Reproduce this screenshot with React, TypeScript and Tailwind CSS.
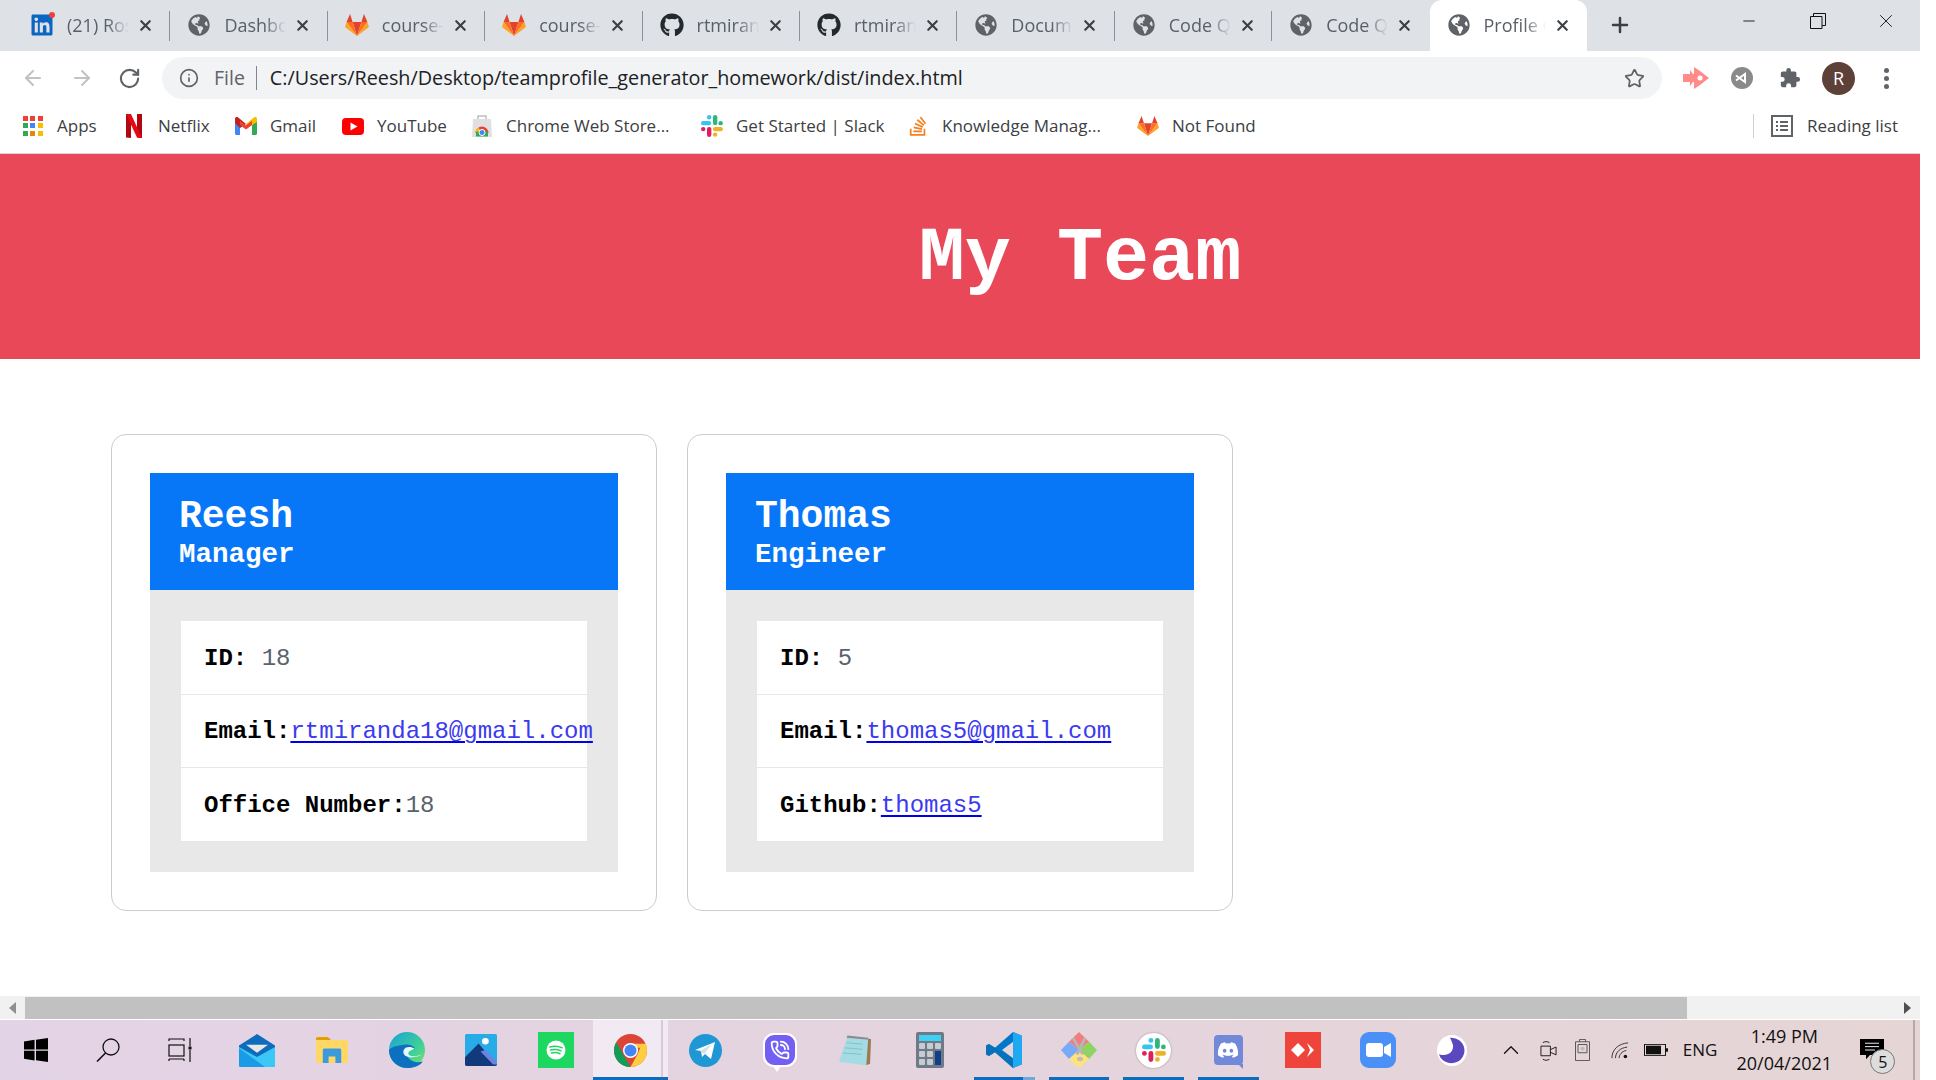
import { ReactNode } from "react";
import { FaGithub, FaGlobeAmericas, FaLinkedin, FaStackOverflow, FaDiscord } from "react-icons/fa";
import { ArrowLeft, ArrowRight, ChevronUp, Info, Minus, PhoneCall, Plus, RotateCw, Star, X } from "lucide-react";

const ui = "font-['Open_Sans',sans-serif]";

function GitLab({ size = 24 }: { size?: number }) {
  return (
    <svg width={size} height={size} viewBox="0 0 24 24">
      <path d="M12 23 16.400 9H7.600Z" fill="#e24329" />
      <path d="M12 23 7.600 9H1.600Z" fill="#fc6d26" />
      <path d="M12 23 16.400 9h6Z" fill="#fc6d26" />
      <path d="M1.600 9 .2 13.400c-.1.400 0 .8.400 1L12 23Z" fill="#fca326" />
      <path d="M22.400 9l1.400 4.400c.1.400 0 .8-.4 1L12 23Z" fill="#fca326" />
      <path d="M1.600 9h6L5 1Z" fill="#e24329" />
      <path d="M22.400 9h-6L19 1Z" fill="#e24329" />
    </svg>
  );
}

function Globe() {
  return <FaGlobeAmericas size={22} className="text-[#5f6368]" />;
}

function LinkedIn() {
  return (
    <span className="relative block">
      <FaLinkedin size={24} className="text-[#0a66c2]" />
      <span className="absolute -right-[1px] -top-[1px] h-[6px] w-[6px] rounded-full bg-[#ea4335]" />
    </span>
  );
}

function Octocat() {
  return <FaGithub size={24} className="text-[#24292e]" />;
}

const tabs: { icon: ReactNode; title: string }[] = [
  { icon: <LinkedIn />, title: "(21) Rosh Miranda" },
  { icon: <Globe />, title: "Dashboard" },
  { icon: <GitLab />, title: "course-content" },
  { icon: <GitLab />, title: "course-content" },
  { icon: <Octocat />, title: "rtmiranda18" },
  { icon: <Octocat />, title: "rtmiranda18" },
  { icon: <Globe />, title: "Document" },
  { icon: <Globe />, title: "Code Quiz" },
  { icon: <Globe />, title: "Code Quiz" },
];

function Tab({ icon, title, active, last }: { icon: ReactNode; title: string; active?: boolean; last?: boolean }) {
  return (
    <div className={`relative flex h-[51px] w-[157.4px] shrink-0 items-center pb-[1px] pl-[17px] ${active ? "rounded-t-[12px] bg-white" : ""}`}>
      <span className="flex w-[24px] justify-center">{icon}</span>
      <span className="ml-[13px] w-[62px] overflow-hidden whitespace-nowrap text-[18px] text-[#5a5f66] [mask-image:linear-gradient(to_right,black_65%,transparent)]">
        {title}
      </span>
      <X size={17} strokeWidth={3} className="ml-[8px] text-[#3c4043]" />
      {!last && !active && <span className="absolute right-0 top-[11px] h-[30px] w-[1px] bg-[#8d9096]" />}
    </div>
  );
}

function AppsGrid() {
  const colors = ["#ef4136", "#ea4335", "#ef4136", "#34a853", "#4285f4", "#fbbc04", "#34a853", "#ea8600", "#fbbc04"];
  return (
    <span className="grid h-[20px] w-[20px] grid-cols-3 gap-[2px]">
      {colors.map((c, i) => (
        <svg key={i} viewBox="0 0 5 5" width="5" height="5">
          <rect width="5" height="5" fill={c} />
        </svg>
      ))}
    </span>
  );
}

function Netflix() {
  return (
    <svg width="16" height="24" viewBox="0 0 16 24">
      <path d="M0 0h5v24l-5-.6Z" fill="#b20710" />
      <path d="M11 0h5v24l-5-.6Z" fill="#b20710" />
      <path d="M0 0h5l11 24-5-.6Z" fill="#e50914" />
    </svg>
  );
}

function Gmail() {
  return (
    <svg width="22" height="18" viewBox="0 0 22 18">
      <path d="M0 2v14.500C0 17.300.7 18 1.500 18H5V8Z" fill="#4285f4" />
      <path d="M22 2v14.500c0 .8-.7 1.500-1.500 1.500H17V8Z" fill="#34a853" />
      <path d="M0 2c0-2 2-2.500 3.200-1.500L11 7 5 11 0 6Z" fill="#c5221f" />
      <path d="M22 2c0-2-2-2.500-3.200-1.500L11 7v5l6-4 5-3Z" fill="#fbbc04" />
      <path d="M5 3.800 11 8.500l6-4.700V8l-6 4.500L5 8Z" fill="#ea4335" />
    </svg>
  );
}

function YouTube() {
  return (
    <svg width="22" height="17" viewBox="0 0 22 17">
      <rect width="22" height="17" rx="4" fill="#f00" />
      <path d="M8.500 4.500v8l7-4Z" fill="#fff" />
    </svg>
  );
}

function WebStore() {
  return (
    <svg width="20" height="22" viewBox="0 0 20 22">
      <path d="M6 4V1h8v3" fill="none" stroke="#bdbdbd" strokeWidth="1.500" />
      <path d="M1 4h18l1 18H0Z" fill="#e0e0e0" />
      <path d="M3.500 18a6.500 6.500 0 0 1 13 0Z" fill="#ea4335" />
      <path d="M3.500 18a6.500 6.500 0 0 1 3-5.500L10 18Z" fill="#fbbc04" />
      <path d="M4 16.500h12v5H4Z" fill="#34a853" />
      <circle cx="10" cy="17.500" r="3" fill="#4285f4" stroke="#fff" />
    </svg>
  );
}

function Slack({ size = 22 }: { size?: number }) {
  return (
    <svg width={size} height={size} viewBox="0 0 24 24">
      <rect x="0" y="6.500" width="11" height="4.800" rx="2.400" fill="#36c5f0" />
      <rect x="6.500" y="0" width="4.800" height="4.800" rx="2.400" fill="#36c5f0" />
      <rect x="13" y="0" width="4.800" height="11" rx="2.400" fill="#2eb67d" />
      <rect x="19" y="6.500" width="4.800" height="4.800" rx="2.400" fill="#2eb67d" />
      <rect x="13" y="13" width="11" height="4.800" rx="2.400" fill="#ecb22e" />
      <rect x="13" y="19" width="4.800" height="4.800" rx="2.400" fill="#ecb22e" />
      <rect x="6.500" y="13" width="4.800" height="11" rx="2.400" fill="#e01e5a" />
      <rect x="0" y="13" width="4.800" height="4.800" rx="2.400" fill="#e01e5a" />
    </svg>
  );
}

const bookmarks: { icon: ReactNode; label: string; w: string }[] = [
  { icon: <AppsGrid />, label: "Apps", w: "w-[101px]" },
  { icon: <Netflix />, label: "Netflix", w: "w-[112px]" },
  { icon: <Gmail />, label: "Gmail", w: "w-[107px]" },
  { icon: <YouTube />, label: "YouTube", w: "w-[129px]" },
  { icon: <WebStore />, label: "Chrome Web Store...", w: "w-[230px]" },
  { icon: <Slack />, label: "Get Started | Slack", w: "w-[206px]" },
  { icon: <FaStackOverflow size={22} className="text-[#f48024]" />, label: "Knowledge Manag...", w: "w-[230px]" },
  { icon: <GitLab />, label: "Not Found", w: "w-[150px]" },
];

function ReadingList() {
  return (
    <svg width="22" height="22" viewBox="0 0 22 22" fill="none" stroke="#5f6368" strokeWidth="2">
      <rect x="1" y="1" width="20" height="20" />
      <path d="M5 7h2M9 7h8M5 11h2M9 11h8M5 15h2M9 15h8" strokeWidth="1.800" />
    </svg>
  );
}

function PuzzleIcon() {
  return (
    <svg width="22" height="22" viewBox="0 0 24 24" fill="#5f6368">
      <path d="M20.500 11H19V7c0-1.100-.9-2-2-2h-4V3.500a2.500 2.500 0 0 0-5 0V5H4c-1.100 0-2 .9-2 2v3.800h1.500a2.700 2.700 0 0 1 0 5.400H2V20c0 1.100.9 2 2 2h3.800v-1.500a2.700 2.700 0 0 1 5.400 0V22H17c1.100 0 2-.9 2-2v-4h1.500a2.500 2.500 0 0 0 0-5Z" />
    </svg>
  );
}

function BrowserChrome() {
  return (
    <>
      <div className={`flex h-[51px] items-start bg-[#dee1e6] pl-[13px] ${ui}`}>
        {tabs.map((t, i) => (
          <Tab key={i} icon={t.icon} title={t.title} last={i === tabs.length - 1} />
        ))}
        <Tab icon={<Globe />} title="Profile Generator" active />
        <Plus size={24} strokeWidth={2.500} className="ml-[21px] mt-[13px] text-[#3c4043]" />
        <div className="ml-auto flex text-[#111]">
          <span className="flex h-[42px] w-[69px] items-center justify-center">
            <Minus size={18} strokeWidth={1.200} />
          </span>
          <span className="flex h-[42px] w-[69px] items-center justify-center">
            <svg width="16" height="16" viewBox="0 0 16 16" fill="none" stroke="#111">
              <path d="M.5 3.500h11.500v12H.5Z" />
              <path d="M3.500 3.500V.5h12v12h-3.500" />
            </svg>
          </span>
          <span className="flex h-[42px] w-[68px] items-center justify-center">
            <X size={22} strokeWidth={1} />
          </span>
        </div>
      </div>

      <div className={`flex h-[54px] items-center bg-white ${ui}`}>
        <ArrowLeft size={24} strokeWidth={2} className="ml-[21px] text-[#c0c2c5]" />
        <ArrowRight size={24} strokeWidth={2} className="ml-[25px] text-[#c0c2c5]" />
        <RotateCw size={23} strokeWidth={2.200} className="ml-[24px] text-[#5f6368]" />
        <div className="ml-[21px] flex h-[42px] w-[1500px] items-center rounded-full bg-[#f1f3f4] pl-[17px]">
          <Info size={20} strokeWidth={2} className="text-[#5f6368]" />
          <span className="ml-[15px] text-[19.500px] text-[#5f6368]">File</span>
          <span className="ml-[11px] h-[24px] w-[1px] bg-[#80868b]" />
          <span className="ml-[13px] text-[19.800px] text-[#202124]">C:/Users/Reesh/Desktop/teamprofile_generator_homework/dist/index.html</span>
          <Star size={21} strokeWidth={2} className="ml-auto mr-[17px] text-[#5f6368]" />
        </div>
        <svg width="26" height="22" viewBox="0 0 26 22" className="ml-[21px]">
          <path d="M0 7h7V3l3 4h1V0l6 4 9 7-9 7-6 4v-7h-1l-3 4v-4H0Z" fill="#ff8b8b" />
          <circle cx="17" cy="11" r="2.500" fill="#fff" />
        </svg>
        <span className="ml-[22px] flex h-[22px] w-[22px] items-center justify-center rounded-full bg-[#8a8a8a]">
          <svg width="14" height="12" viewBox="0 0 14 12" fill="none" stroke="#fff" strokeWidth="2">
            <path d="M1 3.500 10 10V2L1 8.500" />
          </svg>
        </span>
        <span className="ml-[26px]">
          <PuzzleIcon />
        </span>
        <span className="ml-[21px] flex h-[33px] w-[33px] items-center justify-center rounded-full bg-[#5d4037] text-[18px] text-white">R</span>
        <span className="ml-[29px] flex flex-col gap-[3px]">
          <i className="block h-[5px] w-[5px] rounded-full bg-[#5f6368]" />
          <i className="block h-[5px] w-[5px] rounded-full bg-[#5f6368]" />
          <i className="block h-[5px] w-[5px] rounded-full bg-[#5f6368]" />
        </span>
      </div>

      <div className={`flex h-[49px] items-center border-b border-[#d8d8d8] bg-white pb-[6px] pl-[22px] pr-[22px] ${ui}`}>
        {bookmarks.map((b) => (
          <div key={b.label} className={`flex shrink-0 items-center ${b.w}`}>
            <span className="flex w-[22px] justify-center">{b.icon}</span>
            <span className="ml-[13px] whitespace-nowrap text-[17px] text-[#3c4043]">{b.label}</span>
          </div>
        ))}
        <div className="ml-auto flex items-center">
          <span className="h-[24px] w-[1px] bg-[#cfcfcf]" />
          <span className="ml-[17px]">
            <ReadingList />
          </span>
          <span className="ml-[14px] whitespace-nowrap text-[17px] text-[#3c4043]">Reading list</span>
        </div>
      </div>
    </>
  );
}

type Row = { label: string; value: string; href?: boolean; gap?: boolean };

const people: { name: string; role: string; rows: Row[] }[] = [
  {
    name: "Reesh",
    role: "Manager",
    rows: [
      { label: "ID:", value: "18", gap: true },
      { label: "Email:", value: "rtmiranda18@gmail.com", href: true },
      { label: "Office Number:", value: "18" },
    ],
  },
  {
    name: "Thomas",
    role: "Engineer",
    rows: [
      { label: "ID:", value: "5", gap: true },
      { label: "Email:", value: "thomas5@gmail.com", href: true },
      { label: "Github:", value: "thomas5", href: true },
    ],
  },
];

function ProfileCard({ name, role, rows }: { name: string; role: string; rows: Row[] }) {
  return (
    <div className="h-[477px] w-[546px] rounded-[15px] border border-[#cccccc] bg-white p-[38px]">
      <div className="h-[117px] bg-[#0777f8] pl-[29px] pt-[23px] font-bold text-white">
        <h2 className="text-[38px] leading-[42px]">{name}</h2>
        <h3 className="text-[27.500px] leading-[34px]">{role}</h3>
      </div>
      <div className="h-[282px] bg-[#e8e8e8] p-[31px]">
        <ul className="bg-white text-[24px]">
          {rows.map((r, i) => (
            <li key={r.label} className={`flex items-center whitespace-nowrap pl-[23px] pt-[2px] ${i > 0 ? "border-t border-[#e8e8e8]" : ""} ${i === 2 ? "h-[74px]" : "h-[73px]"}`}>
              <strong className="font-bold text-black">{r.label}</strong>
              {r.gap && <span>&nbsp;</span>}
              {r.href ? (
                <a href="#" className="text-[#3a3af0] underline decoration-[#0000ee] decoration-2 underline-offset-[3px]">
                  {r.value}
                </a>
              ) : (
                <span className="text-[#5a626c]">{r.value}</span>
              )}
            </li>
          ))}
        </ul>
      </div>
    </div>
  );
}

function Scrollbar() {
  return (
    <div className="flex h-[24px] items-center border-y border-t-[#f1f1f1] border-b-white bg-[#f1f1f1]">
      <span className="flex h-full w-[25px] shrink-0 items-center justify-center">
        <i className="block h-0 w-0 border-y-[6px] border-r-[7px] border-y-transparent border-r-[#8f8f8f]" />
      </span>
      <span className="h-full w-[1662px] bg-[#c1c1c1]" />
      <span className="ml-auto flex h-full w-[25px] items-center justify-center">
        <i className="block h-0 w-0 border-y-[6px] border-l-[7px] border-y-transparent border-l-[#505050]" />
      </span>
    </div>
  );
}

function WinLogo() {
  return (
    <svg width="24" height="24" viewBox="0 0 25 26" preserveAspectRatio="none">
      <path d="M0 3.800 11 2v10.500H0ZM12.500 1.800 25 0v12.500H12.500ZM0 13.800h11v10.500L0 22.500ZM12.500 13.800H25V26l-12.500-1.800Z" fill="#000" />
    </svg>
  );
}

function SearchGlyph() {
  return (
    <svg width="24" height="24" viewBox="0 0 24 24" fill="none" stroke="#111" strokeWidth="1.300">
      <circle cx="15" cy="9" r="8" />
      <path d="M9.500 15 1 23.500" strokeWidth="1.600" />
    </svg>
  );
}

function TaskView() {
  return (
    <svg width="24" height="24" viewBox="0 0 24 24" fill="none" stroke="#111" strokeWidth="1.200">
      <path d="M1 3V1h15v2M1 21v2M16 21v2M1 21h15" />
      <rect x="1" y="7" width="15" height="11" />
      <path d="M22 0v8M22 12v12" />
      <rect x="20.500" y="8.500" width="3" height="3" fill="#111" stroke="none" />
    </svg>
  );
}

function Mail() {
  return (
    <svg width="36" height="33" viewBox="0 0 36 46" preserveAspectRatio="none">
      <path d="M18 0 36 16v28a2 2 0 0 1-2 2H2a2 2 0 0 1-2-2V16Z" fill="#0f6cbd" />
      <path d="M7 15h22L18 26Z" fill="#e8e8e8" />
      <path d="M0 18 18 32 36 18v26a2 2 0 0 1-2 2H2a2 2 0 0 1-2-2Z" fill="#3bc8f6" />
      <path d="M0 20 26 46H2a2 2 0 0 1-2-2Z" fill="#1a9be6" />
    </svg>
  );
}

function Folder() {
  return (
    <svg width="32" height="26" viewBox="0 0 33 36" preserveAspectRatio="none">
      <path d="M0 2a2 2 0 0 1 2-2h10l3 3v3H0Z" fill="#e0a100" />
      <path d="M0 4h31a2 2 0 0 1 2 2v28a2 2 0 0 1-2 2H2a2 2 0 0 1-2-2Z" fill="#ffd766" />
      <path d="M7 18a2 2 0 0 1 2-2h15a2 2 0 0 1 2 2v18h-6v-9h-7v9H7Z" fill="#3a9bdc" />
    </svg>
  );
}

function Edge() {
  return (
    <svg width="36" height="36" viewBox="0 0 37 48" preserveAspectRatio="none">
      <defs>
        <linearGradient id="edgeTop" x1="0" y1="0" x2="1" y2="1">
          <stop offset="0" stopColor="#1aa1d8" />
          <stop offset="0.6" stopColor="#3dcf9a" />
          <stop offset="1" stopColor="#7fe06a" />
        </linearGradient>
      </defs>
      <ellipse cx="18.500" cy="24" rx="18.500" ry="24" fill="url(#edgeTop)" />
      <path d="M0 24C0 38 9 48 19 48c7 0 13-3 16-9-3 2-8 2-12-1-5-4-6-11-2-15 2-2 4-2 6-1-3-5-7-6-11-5C8 18 2 20 0 24Z" fill="#0c6fc0" />
      <path d="M22 25c-2 1-3 4-1 6 2 2 8 2 13-1-5 4-12 5-17 2-3-3-3-8 0-11 3-2 7-1 9 1-1 1-3 2-4 3Z" fill="#e7f6ff" />
    </svg>
  );
}

function Photos() {
  return (
    <svg width="32" height="32" viewBox="0 0 33 44" preserveAspectRatio="none">
      <rect width="33" height="44" rx="2" fill="#29abe8" />
      <ellipse cx="21" cy="10" rx="3.500" ry="4.500" fill="#fff" />
      <path d="M0 42V32L14 13l9 14 10 13v2a2 2 0 0 1-2 2H2a2 2 0 0 1-2-2Z" fill="#123a7a" />
      <path d="M21 22l12 16v4H29L16 24Z" fill="#6c83df" />
    </svg>
  );
}

function Spotify() {
  return (
    <svg width="36" height="36" viewBox="0 0 36 36">
      <rect width="36" height="36" fill="#1ed760" />
      <circle cx="18" cy="18" r="9.500" fill="#fff" />
      <path d="M12 15c4-1.200 8-1 12 .8M12.500 18c4-.9 7-.7 10.500.9M13.500 21c3-.7 6-.5 8.500.7" stroke="#1ed760" strokeWidth="1.500" fill="none" strokeLinecap="round" />
    </svg>
  );
}

function Chrome() {
  return (
    <svg width="33" height="33" viewBox="0 0 48 48">
      <circle cx="24" cy="24" r="24" fill="#db4437" />
      <path d="M24 48C10.700 48 0 37.300 0 24c0-4.400 1.200-8.500 3.200-12l12 21 9 15Z" fill="#0f9d58" />
      <path d="M24 48l11-20 3-8 8-6c1.300 3 2 6.500 2 10 0 13.300-10.700 24-24 24Z" fill="#ffcd40" />
      <path d="M24 14h22c1 1 1 3 2 6H34Z" fill="#ffcd40" />
      <circle cx="24" cy="24" r="11" fill="#fff" />
      <circle cx="24" cy="24" r="8.800" fill="#4285f4" />
    </svg>
  );
}

function Telegram() {
  return (
    <svg width="33" height="33" viewBox="0 0 33 33">
      <circle cx="16.500" cy="16.500" r="16.500" fill="#1f97d4" />
      <path d="M6 16 26 8l-4 17-6-5-3 3-1-6Z" fill="#fff" />
      <path d="M15 20 23 10 11 17Z" fill="#c8e4f4" />
    </svg>
  );
}

function Viber() {
  return (
    <span className="relative flex h-[34px] w-[34px] items-center justify-center rounded-[11px] border-[2px] border-white bg-[#7360f2]">
      <PhoneCall size={20} strokeWidth={2.200} className="text-white" />
      <i className="absolute -bottom-[7px] left-[8px] block h-0 w-0 border-l-[4px] border-r-[4px] border-t-[6px] border-l-transparent border-r-transparent border-t-white" />
    </span>
  );
}

function Notepad() {
  return (
    <svg width="32" height="32" viewBox="0 0 34 44" preserveAspectRatio="none">
      <path d="M9 4 33 7l-2 32-3 4L0 38Z" fill="#a5dbe3" />
      <path d="M31 7h3l-1 34-4 2Z" fill="#9b7a4f" />
      <path d="M9 2 31 5l1 3L8 5Z" fill="#8c8c8c" />
      <path d="M8 12 25 14M6 19l19 2M4 26l20 2" stroke="#7cbcc8" strokeWidth="1" />
    </svg>
  );
}

function Calc() {
  const key = <i className="block rounded-[1px] bg-[#c7ccd1]" />;
  return (
    <span className="flex h-[36px] w-[28px] flex-col gap-[2px] rounded-[2px] bg-[#6e7a87] p-[3px]">
      <i className="block h-[6px] bg-[#40cff5]" />
      <span className="grid flex-1 grid-cols-3 grid-rows-3 gap-[2px]">
        {key}
        {key}
        {key}
        {key}
        {key}
        <i className="row-span-2 block bg-[#123f85]" />
        {key}
        {key}
      </span>
    </span>
  );
}

function VSCode() {
  return (
    <svg width="36" height="36" viewBox="0 0 36 48" preserveAspectRatio="none">
      <path d="M27 0 36 5v38l-9 5L9 27 3 32l-3-2V18l3-2 6 5ZM27 13 16 24l11 11Z" fill="#0078c9" />
      <path d="M27 0 36 5v38l-9 5Z" fill="#1ea9f2" />
      <path d="M0 18 3 16 27 35v13L9 27 3 32l-3-2Z" fill="#0a6fb3" opacity="0.7" />
    </svg>
  );
}

function Kraken() {
  return (
    <svg width="36" height="36" viewBox="0 0 36 48" preserveAspectRatio="none">
      <path d="M18 0 28 13 18 24 8 13Z" fill="#f47c7c" />
      <path d="M0 24 8 13 18 24 8 36Z" fill="#78aaf8" />
      <path d="M36 24 28 13 18 24 28 36Z" fill="#8ed462" />
      <path d="M18 48 8 36 18 24 28 36Z" fill="#ffe27a" />
      <path d="M12 8 22 30M24 8 16 30" stroke="#b6b6b6" strokeWidth="3" />
      <circle cx="19" cy="36" r="3" fill="#bdbdbd" />
    </svg>
  );
}

function SlackRound() {
  return (
    <span className="flex h-[35px] w-[35px] items-center justify-center rounded-full bg-white shadow-[0_0_2px_#888]">
      <Slack size={24} />
    </span>
  );
}

function Discord() {
  return (
    <span className="relative flex h-[30px] w-[29px] items-center justify-center rounded-[4px] bg-[#7289da]">
      <FaDiscord size={22} className="text-white" />
      <i className="absolute -bottom-[4px] right-0 block h-0 w-0 border-l-[5px] border-t-[5px] border-l-transparent border-t-[#7289da]" />
    </span>
  );
}

function AnyDesk() {
  return (
    <svg width="36" height="36" viewBox="0 0 36 36">
      <rect width="36" height="36" fill="#ef443b" />
      <path d="M13 11l7 7-7 7-7-7Z" fill="#fff" />
      <path d="M22 11l7 7-7 7 3-7Z" fill="#fff" />
    </svg>
  );
}

function Zoom() {
  return (
    <svg width="36" height="36" viewBox="0 0 36 36">
      <rect width="36" height="36" rx="9" fill="#4a90f7" />
      <rect x="6" y="11" width="17" height="14" rx="3" fill="#fff" />
      <path d="M24 15l7-4v14l-7-4Z" fill="#fff" />
    </svg>
  );
}

function Moon() {
  return (
    <svg width="30" height="31" viewBox="0 0 30 34" preserveAspectRatio="none">
      <ellipse cx="15" cy="17" rx="15" ry="17" fill="#fff" />
      <path d="M13 3a13 14 0 1 1-11 18c7 3 15-1 14-10-1-3-2-6-3-8Z" fill="#5b47c0" />
    </svg>
  );
}

const taskbarApps: { icon: ReactNode; active?: boolean; open?: boolean; split?: boolean }[] = [
  { icon: <Mail /> },
  { icon: <Folder /> },
  { icon: <Edge /> },
  { icon: <Photos /> },
  { icon: <Spotify /> },
  { icon: <Chrome />, active: true },
  { icon: <Telegram /> },
  { icon: <Viber /> },
  { icon: <Notepad /> },
  { icon: <Calc /> },
  { icon: <VSCode />, open: true, split: true },
  { icon: <Kraken />, open: true },
  { icon: <SlackRound />, open: true },
  { icon: <Discord />, open: true },
  { icon: <AnyDesk /> },
  { icon: <Zoom /> },
  { icon: <Moon /> },
];

function Tray() {
  return (
    <div className={`ml-[8px] flex items-center text-[#111] ${ui}`}>
      <ChevronUp size={26} strokeWidth={1.200} />
      <svg width="17" height="21" viewBox="0 0 18 24" fill="none" stroke="#111" strokeWidth="1" preserveAspectRatio="none" className="ml-[16px]">
        <path d="M1 7h10v11H1ZM11 11l6-3v9l-6-3M3 3c2-1.500 5-1.500 7 0M3 22c2 1.500 5 1.500 7 0" />
      </svg>
      <svg width="15" height="22" viewBox="0 0 15 24" fill="none" stroke="#555" preserveAspectRatio="none" className="ml-[18px]">
        <path d="M.5 3h14v20.500H.5ZM4.500 3V.5h6V3" />
        <path d="M3 6h9v9H3Z" />
        <circle cx="7.500" cy="10.500" r="2" fill="#bbb" stroke="none" />
      </svg>
      <svg width="18" height="17" viewBox="0 0 20 20" fill="none" stroke="#222" preserveAspectRatio="none" className="ml-[21px]">
        <path d="M1 19C1 9 8 2 19 1M5 19c0-7 5-12 13-13M9 19c0-4 3-8 8-9" />
        <circle cx="16" cy="17" r="2" fill="#111" stroke="none" />
      </svg>
      <svg width="24" height="12" viewBox="0 0 24 14" preserveAspectRatio="none" className="ml-[15px]">
        <rect x=".5" y=".5" width="21" height="13" fill="none" stroke="#111" />
        <rect x="2" y="2" width="15" height="10" fill="#111" />
        <rect x="22" y="5" width="2" height="4" fill="#111" />
      </svg>
      <span className="ml-[15px] text-[17px]">ENG</span>
      <div className="ml-[19px] flex w-[96px] flex-col items-center whitespace-nowrap text-[18px] leading-[27px]">
        <span>1:49 PM</span>
        <span>20/04/2021</span>
      </div>
      <span className="relative ml-[28px] block h-[22px] w-[24px]">
        <svg width="24" height="22" viewBox="0 0 24 26" preserveAspectRatio="none">
          <path d="M0 0h24v19H10l-4 5v-5H0Z" fill="#000" />
          <path d="M5 5h14M5 9h14M5 13h10" stroke="#fff" />
        </svg>
        <span className="absolute -bottom-[13px] -right-[11px] flex h-[25px] w-[25px] items-center justify-center rounded-full border border-[#777] bg-[#ddd] text-[16px]">5</span>
      </span>
    </div>
  );
}

function Taskbar() {
  return (
    <div className="relative flex h-[60px] items-center bg-gradient-to-r from-[#e3d3e6] to-[#e6d5d5]">
      <span className="flex w-[72px] justify-center">
        <WinLogo />
      </span>
      <span className="flex w-[72px] justify-center">
        <SearchGlyph />
      </span>
      <span className="flex w-[72px] justify-center">
        <TaskView />
      </span>
      <div className="ml-[4px] flex h-full">
        {taskbarApps.map((app, i) => (
          <span
            key={i}
            className={`relative flex h-full w-[74.700px] items-center justify-center ${app.active ? "bg-[#f2eaf3]" : ""}`}
          >
            {app.icon}
            {app.active && <i className="absolute right-[5px] top-0 block h-full w-[2px] bg-[#d8c8da]" />}
            {app.active && <i className="absolute inset-x-0 bottom-0 block h-[3px] bg-[#0f6cbd]" />}
            {app.open && <i className="absolute bottom-0 left-[7px] right-[7px] block h-[3px] bg-[#0f6cbd]" />}
            {app.split && <i className="absolute bottom-0 right-[7px] block h-[3px] w-[12px] bg-[#6fa8dc]" />}
          </span>
        ))}
      </div>
      <Tray />
      <span className="absolute right-[5px] top-0 h-full w-[2px] bg-[#b5a8ab]" />
    </div>
  );
}

export default function App() {
  return (
    <div className="h-[1080px] w-[1936px] overflow-hidden bg-white">
      <div className="flex h-full w-[1920px] flex-col">
        <BrowserChrome />
        <header className="flex h-[205px] items-center justify-center bg-[#e94858] pl-[240px] pt-[4px] font-['Liberation_Mono',monospace]">
          <h1 className="text-[76.800px] font-bold text-white">My Team</h1>
        </header>
        <main className="flex flex-1 gap-[30px] pl-[111px] pt-[75px] font-['Liberation_Mono',monospace]">
          {people.map((p) => (
            <ProfileCard key={p.name} {...p} />
          ))}
        </main>
        <Scrollbar />
        <Taskbar />
      </div>
    </div>
  );
}
